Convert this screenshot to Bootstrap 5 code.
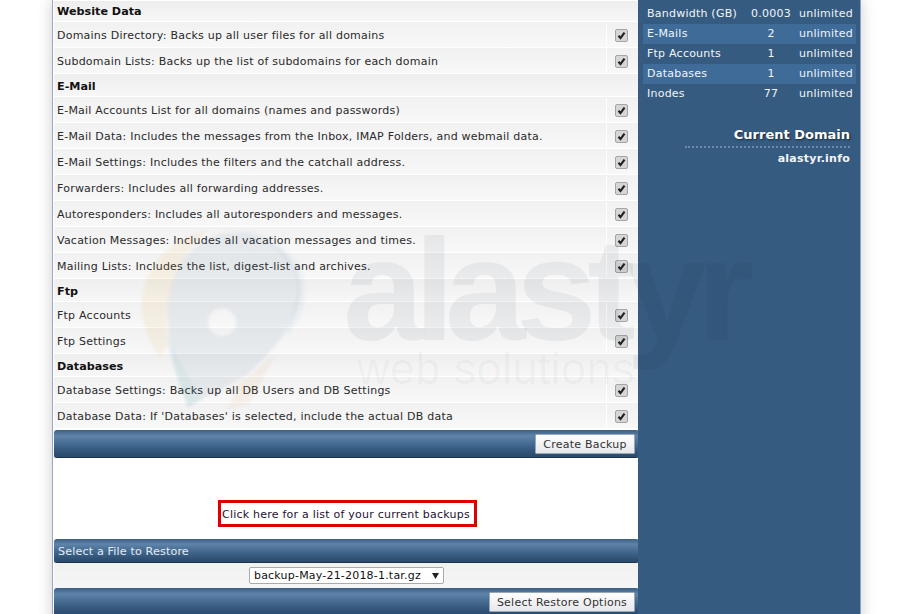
<!DOCTYPE html>
<html lang="en"><head><meta charset="utf-8"><title>Create Backup</title>
<link href="https://cdn.jsdelivr.net/npm/bootstrap@5.3.0/dist/css/bootstrap.min.css" rel="stylesheet">
<style>
html,body{height:614px;overflow:hidden;background:#fff}
body{font-family:"DejaVu Sans",Verdana,sans-serif;font-size:11px;color:#222;line-height:1.2;letter-spacing:.23px}
.shell{position:relative;margin-left:52px;width:809px;height:640px;border-left:1px solid #9aa6cc;border-right:1px solid #8f9fcb;box-shadow:0 0 14px rgba(0,0,0,.2);background:#fff;overflow:hidden}
.mainc{width:585px;flex:none;padding:1px 0 0 1px}
.sidec{width:222px;flex:none;background:#365b80;color:#fff;padding:4px 4px 0 5px}
.sec-head{height:23px;padding:3px 0 0 3px;font-weight:700;font-size:11.2px;letter-spacing:0;color:#111;border-bottom:1px solid #fff;background:linear-gradient(#eeeeee,#f7f7f7)}
.sec-first{height:21px;padding-top:1px}
.opt{height:26px;padding-top:1px;border-bottom:1px solid #fff;background:linear-gradient(#f1f1f1,#f8f8f8)}
.opt-label{flex:1;padding:1px 0 0 3px;color:#2a2a2a}
.opt-check{width:32px;height:100%;margin-top:-1px;border-left:1px solid #fff;padding-top:1px}
.opt-check .form-check-input{width:13px;height:13px;margin:0 0 0 8px;border:1px solid #a5a5a5;border-radius:2px;background-color:#d6d6d6;background-size:11px 11px;background-image:url("data:image/svg+xml,%3csvg xmlns='http://www.w3.org/2000/svg' viewBox='0 0 11 11'%3e%3cpath fill='none' stroke='%23222' stroke-width='2.200' d='M2.500 5.800l2 2.300 4-5.400'/%3e%3c/svg%3e");box-shadow:none}
.barx{width:585px;border-radius:3px;background:linear-gradient(#3c5f84 0,#5f83a9 22%,#466c93 50%,#2f5174 85%,#2b4b6c 100%);border-bottom:1px solid #1f3346;box-shadow:0 1px 1px rgba(0,0,0,.25)}
.bar-act{height:28px;padding:1px 4px 0 0}
.bar-first{margin-top:1px}
.bar-title{height:24px;padding:2px 0 0 4px;color:#e4ecf4;font-size:11.2px;letter-spacing:.12px}
.btnx{font-size:11px;line-height:1;padding:1px 0 0;height:20px;color:#333;border:1px solid #9aa7b5;border-radius:1px;background:linear-gradient(#fff,#e6e7ea);font-family:inherit;letter-spacing:.23px}
.btn-create{width:100px}
.btn-restore{width:146px}
.gap-area{height:81px;background:#fff;padding-top:42px}
.redbox{width:259px;height:27px;margin-left:164px;border:3px solid #e00000;padding:2px 0 0 1px;color:#1c1233;text-decoration:none;background:#fff;font-size:11px}
.sel-row{height:25px;padding-left:1px;background:linear-gradient(#f1f1f1,#f6f6f6)}
.selx{width:195px;height:17px;padding:0 0 0 4px;font-size:11px;line-height:1;color:#111;border:1px solid #aaa;border-radius:2px;font-family:inherit;letter-spacing:.2px;background-color:#fff;background-position:right 4px center;background-size:7px 6px;background-repeat:no-repeat;background-image:url("data:image/svg+xml,%3csvg xmlns='http://www.w3.org/2000/svg' viewBox='0 0 7 6'%3e%3cpath fill='%23222' d='M0 0h7L3.500 6z'/%3e%3c/svg%3e")}
.stat{height:20px;padding-left:4px;color:#f1f5f9}
.stat-alt{background:#3f6b99}
.stat-name{width:96px;flex:none}
.stat-val{width:56px;flex:none;text-align:center}
.stat-lim{flex:1;min-width:0;text-align:right;padding-right:4px;white-space:nowrap}
.dom-title{margin-top:23px;padding-right:6px;padding-bottom:3px;text-align:right;font-weight:700;font-size:13px;letter-spacing:0;text-shadow:1px 1px 2px rgba(0,0,0,.6);color:#fff}
.dom-rule{margin-left:42px;margin-right:6px;border-top:2px dotted #6f8aa6}
.dom-name{margin-top:4px;padding-right:6px;text-align:right;font-weight:700;font-size:11px;color:#f2f5f9}
.wmark{position:absolute;left:0;top:0;width:809px;height:430px;pointer-events:none;overflow:hidden}
.wm-logo{position:absolute;left:85px;top:225px;filter:blur(1.5px)}
.wm-name{position:absolute;left:290px;top:218px;font-family:"Liberation Sans",sans-serif;font-weight:700;font-size:145px;line-height:1;letter-spacing:-9.500px;color:rgba(20,30,45,.06);filter:blur(.6px)}
.wm-sub{position:absolute;left:304px;top:346px;font-family:"Liberation Sans",sans-serif;font-size:45px;line-height:1;letter-spacing:.4px;color:rgba(20,30,45,.04)}
</style></head>
<body>
<div class="shell">
<div class="d-flex">
<main class="mainc">
  <div class="sec-head sec-first d-flex align-items-center">Website Data</div>
  <div class="opt d-flex align-items-center"><div class="opt-label">Domains Directory: Backs up all user files for all domains</div><div class="opt-check d-flex align-items-center"><input class="form-check-input" type="checkbox" checked aria-label="Domains Directory"></div></div>
  <div class="opt d-flex align-items-center"><div class="opt-label">Subdomain Lists: Backs up the list of subdomains for each domain</div><div class="opt-check d-flex align-items-center"><input class="form-check-input" type="checkbox" checked aria-label="Subdomain Lists"></div></div>
  <div class="sec-head d-flex align-items-center">E-Mail</div>
  <div class="opt d-flex align-items-center"><div class="opt-label">E-Mail Accounts List for all domains (names and passwords)</div><div class="opt-check d-flex align-items-center"><input class="form-check-input" type="checkbox" checked aria-label="E-Mail Accounts"></div></div>
  <div class="opt d-flex align-items-center"><div class="opt-label">E-Mail Data: Includes the messages from the Inbox, IMAP Folders, and webmail data.</div><div class="opt-check d-flex align-items-center"><input class="form-check-input" type="checkbox" checked aria-label="E-Mail Data"></div></div>
  <div class="opt d-flex align-items-center"><div class="opt-label">E-Mail Settings: Includes the filters and the catchall address.</div><div class="opt-check d-flex align-items-center"><input class="form-check-input" type="checkbox" checked aria-label="E-Mail Settings"></div></div>
  <div class="opt d-flex align-items-center"><div class="opt-label">Forwarders: Includes all forwarding addresses.</div><div class="opt-check d-flex align-items-center"><input class="form-check-input" type="checkbox" checked aria-label="Forwarders"></div></div>
  <div class="opt d-flex align-items-center"><div class="opt-label">Autoresponders: Includes all autoresponders and messages.</div><div class="opt-check d-flex align-items-center"><input class="form-check-input" type="checkbox" checked aria-label="Autoresponders"></div></div>
  <div class="opt d-flex align-items-center"><div class="opt-label">Vacation Messages: Includes all vacation messages and times.</div><div class="opt-check d-flex align-items-center"><input class="form-check-input" type="checkbox" checked aria-label="Vacation Messages"></div></div>
  <div class="opt d-flex align-items-center"><div class="opt-label">Mailing Lists: Includes the list, digest-list and archives.</div><div class="opt-check d-flex align-items-center"><input class="form-check-input" type="checkbox" checked aria-label="Mailing Lists"></div></div>
  <div class="sec-head d-flex align-items-center">Ftp</div>
  <div class="opt d-flex align-items-center"><div class="opt-label">Ftp Accounts</div><div class="opt-check d-flex align-items-center"><input class="form-check-input" type="checkbox" checked aria-label="Ftp Accounts"></div></div>
  <div class="opt d-flex align-items-center"><div class="opt-label">Ftp Settings</div><div class="opt-check d-flex align-items-center"><input class="form-check-input" type="checkbox" checked aria-label="Ftp Settings"></div></div>
  <div class="sec-head d-flex align-items-center">Databases</div>
  <div class="opt d-flex align-items-center"><div class="opt-label">Database Settings: Backs up all DB Users and DB Settings</div><div class="opt-check d-flex align-items-center"><input class="form-check-input" type="checkbox" checked aria-label="Database Settings"></div></div>
  <div class="opt d-flex align-items-center"><div class="opt-label">Database Data: If 'Databases' is selected, include the actual DB data</div><div class="opt-check d-flex align-items-center"><input class="form-check-input" type="checkbox" checked aria-label="Database Data"></div></div>
  <div class="barx bar-act bar-first d-flex align-items-center justify-content-end"><button class="btn btnx btn-create" type="button">Create Backup</button></div>
  <div class="gap-area"><a class="redbox d-flex align-items-center" href="#">Click here for a list of your current backups</a></div>
  <div class="barx bar-title d-flex align-items-center">Select a File to Restore</div>
  <div class="sel-row d-flex align-items-center justify-content-center"><select class="form-select selx" aria-label="Backup file"><option>backup-May-21-2018-1.tar.gz</option></select></div>
  <div class="barx bar-act d-flex align-items-center justify-content-end"><button class="btn btnx btn-restore" type="button">Select Restore Options</button></div>
</main>
<aside class="sidec">
  <div class="stat d-flex align-items-center"><span class="stat-name">Bandwidth (GB)</span><span class="stat-val">0.0003</span><span class="stat-lim">unlimited</span></div>
  <div class="stat stat-alt d-flex align-items-center"><span class="stat-name">E-Mails</span><span class="stat-val">2</span><span class="stat-lim">unlimited</span></div>
  <div class="stat d-flex align-items-center"><span class="stat-name">Ftp Accounts</span><span class="stat-val">1</span><span class="stat-lim">unlimited</span></div>
  <div class="stat stat-alt d-flex align-items-center"><span class="stat-name">Databases</span><span class="stat-val">1</span><span class="stat-lim">unlimited</span></div>
  <div class="stat d-flex align-items-center"><span class="stat-name">Inodes</span><span class="stat-val">77</span><span class="stat-lim">unlimited</span></div>
  <div class="dom-title">Current Domain</div>
  <div class="dom-rule"></div>
  <div class="dom-name">alastyr.info</div>
</aside>
</div>
<div class="wmark" aria-hidden="true">
  <svg class="wm-logo" width="180" height="190" viewBox="0 0 180 190">
    <path d="M4 85C2 50 25 15 70 5 40 30 24 70 30 120l-8 12C12 118 5 103 4 85z" fill="#e9b23c" opacity=".1"/>
    <path d="M90 4c45 0 78 30 78 62 0 18-8 32-20 48L160 60C150 25 120 10 90 4z" fill="#3d8ec4" opacity=".05"/>
    <path fill-rule="evenodd" d="M30 80C32 40 60 8 95 8c38 0 68 26 68 58 0 30-30 62-55 85l-58 31C38 150 28 115 30 80zM84 83a14 14 0 1 0 .1 0z" fill="#50708c" opacity=".09"/>
    <path d="M28 108c4 30 14 55 22 74l14-8C50 150 36 128 28 108z" fill="#3cb4b4" opacity=".08"/>
    <path d="M100 160l38-32-26 50-22 6z" fill="#e8873c" opacity=".08"/>
  </svg>
  <div class="wm-name">alastyr</div>
  <div class="wm-sub">web solutions</div>
</div>
</div>
<script src="https://cdn.jsdelivr.net/npm/bootstrap@5.3.0/dist/js/bootstrap.bundle.min.js"></script>
</body></html>
